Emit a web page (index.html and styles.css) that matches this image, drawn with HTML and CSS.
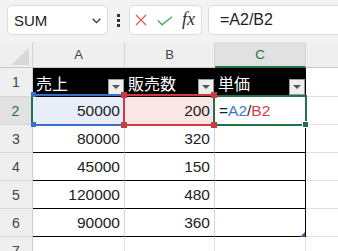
FILE: index.html
```html
<!DOCTYPE html>
<html lang="ja">
<head>
<meta charset="utf-8">
<link rel="stylesheet" href="styles.css">
</head>
<body>
<div class="toolbar">
  <div class="namebox"><span>SUM</span>
    <svg class="chev" width="9" height="6" viewBox="0 0 9 6"><path d="M0.7 0.8 L4.5 4.6 L8.3 0.8" fill="none" stroke="#333" stroke-width="1.3"/></svg>
  </div>
  <div class="dots"><i></i><i></i><i></i></div>
  <div class="fxgroup">
    <svg class="xic" width="12" height="12" viewBox="0 0 12 12"><path d="M1 1 L11 11 M11 1 L1 11" stroke="#e0595b" stroke-width="1.3" fill="none"/></svg>
    <svg class="ok" width="16" height="10" viewBox="0 0 16 10"><path d="M1 4.5 L5 8.8 L15 0.8" stroke="#4aa55c" stroke-width="1.3" fill="none"/></svg>
    <span class="fx">fx</span>
  </div>
  <div class="formula">=A2/B2</div>
</div>
<div class="sheet">
  <div class="corner"><svg width="18" height="17" viewBox="0 0 18 17"><path d="M18 0 L18 17 L0 17 Z" fill="#d8d8d8"/></svg></div>
  <div class="ch">A</div><div class="ch">B</div><div class="ch sel">C</div><div class="ch"></div>

  <div class="rh">1</div>
  <div class="th"><span>売上</span><span class="flt"></span></div>
  <div class="th"><span>販売数</span><span class="flt"></span></div>
  <div class="th c"><span>単価</span><span class="flt"></span></div>
  <div class="e"></div>

  <div class="rh sel">2</div>
  <div class="td a2">50000</div>
  <div class="td b2">200</div>
  <div class="td c left"><span>=</span><span class="ra">A2</span><span>/</span><span class="rb">B2</span></div>
  <div class="e"></div>

  <div class="rh">3</div>
  <div class="td">80000</div><div class="td">320</div><div class="td c"></div><div class="e"></div>

  <div class="rh">4</div>
  <div class="td">45000</div><div class="td">150</div><div class="td c"></div><div class="e"></div>

  <div class="rh">5</div>
  <div class="td">120000</div><div class="td">480</div><div class="td c"></div><div class="e"></div>

  <div class="rh">6</div>
  <div class="td">90000</div><div class="td">360</div><div class="td c"></div><div class="e"></div>

  <div class="rh">7</div>
  <div class="e"></div><div class="e"></div><div class="e"></div><div class="e"></div>

  <div class="rng-a"></div>
  <div class="rng-b"></div>
  <div class="act"></div>
  <i class="hb hb1"></i><i class="hb hb2"></i>
  <i class="hr hr1"></i><i class="hr hr2"></i><i class="hr hr3"></i><i class="hr hr4"></i>
  <i class="hg"></i>
  <i class="resize"></i>
</div>
</body>
</html>
```
FILE: styles.css
```css
* { box-sizing: border-box; margin: 0; padding: 0; }
html, body { overflow: hidden; }
body {
  margin: 0;
  width: 338px;
  height: 251px;
  background: #fff;
  font-family: "Liberation Sans", "Noto Sans CJK JP", sans-serif;
  color: #222;
}
.toolbar {
  height: 42px;
  background: #f3f3f3;
  display: flex;
  align-items: flex-start;
  padding: 5px 0 0 7px;
  white-space: nowrap;
  overflow: hidden;
}
.namebox {
  flex: none;
  width: 101px;
  height: 30px;
  background: #fff;
  border: 1px solid #dcdcdc;
  border-radius: 5px;
  display: flex;
  align-items: center;
  justify-content: space-between;
  padding: 0 6px;
  font-size: 15px;
  color: #222;
}
.chev { margin-top: 1px; }
.dots {
  flex: none;
  width: 21px;
  height: 30px;
  display: flex;
  flex-direction: column;
  align-items: center;
  justify-content: center;
  gap: 2px;
}
.dots i {
  display: block;
  width: 3px;
  height: 3px;
  background: #333;
}
.fxgroup {
  flex: none;
  width: 73px;
  height: 30px;
  background: #fff;
  border: 1px solid #dcdcdc;
  border-radius: 5px;
  display: flex;
  align-items: center;
  padding-left: 5px;
}
.ok { margin-left: 10px; margin-top: 1px; }
.fx {
  margin-left: 9px;
  font-family: "Liberation Serif", serif;
  font-style: italic;
  font-size: 18px;
  color: #333;
  margin-top: -2px;
}
.formula {
  flex: 1 0 auto;
  margin-left: 6px;
  margin-right: -10px;
  height: 30px;
  background: #fff;
  border: 1px solid #dcdcdc;
  border-radius: 5px;
  display: flex;
  align-items: center;
  padding-left: 11px;
  font-size: 16px;
  color: #1e1e1e;
}

.sheet {
  position: relative;
  height: 209px;
  overflow: hidden;
  display: grid;
  grid-template-columns: 33px 92px 90px 91px 91px;
  grid-template-rows: 26px 29px 28px 28px 28px 28px 28px 28px;
}
.corner {
  background: #efefef;
  border-right: 1px solid #d4d4d4;
  border-bottom: 1px solid #c8c8c8;
  display: flex;
  justify-content: flex-end;
  align-items: flex-end;
  padding: 0 3px 2px 0;
}
.ch {
  background: #efefef;
  border-right: 1px solid #d4d4d4;
  border-bottom: 1px solid #c8c8c8;
  display: flex;
  align-items: center;
  justify-content: center;
  font-size: 13px;
  color: #444;
}
.ch.sel {
  background: #e1e1e1;
  color: #217346;
  border-bottom: 2px solid #217346;
}
.rh {
  background: #efefef;
  border-right: 1px solid #cfcfcf;
  border-bottom: 1px solid #d6d6d6;
  display: flex;
  align-items: center;
  justify-content: center;
  font-size: 14px;
  color: #444;
}
.rh.sel {
  background: #e1e1e1;
  color: #217346;
  border-right: 2px solid #217346;
}
.th {
  background: #000;
  color: #fff;
  font-size: 16px;
  display: flex;
  align-items: center;
  justify-content: space-between;
  padding: 0 1px 0 3px;
}
.flt {
  align-self: flex-end;
  margin-bottom: 2px;
  width: 16px;
  height: 16px;
  background: #eeeeee;
  border: 1px solid #9c9c9c;
  position: relative;
}
.flt::after {
  content: "";
  position: absolute;
  left: 3px;
  top: 5px;
  border-left: 4px solid transparent;
  border-right: 4px solid transparent;
  border-top: 4px solid #555;
}
.td {
  border-right: 1px solid #d4d4d4;
  border-bottom: 1px solid #000;
  display: flex;
  align-items: center;
  justify-content: flex-end;
  padding-right: 4px;
  font-size: 15.5px;
  color: #222;
}
.td.c { border-right: 1px solid #000; }
.td.left { justify-content: flex-start; padding-left: 4px; }
.td.a2 { background: #e7eef9; }
.td.b2 { background: #fbe6e6; }
.ra { color: #3f76d0; }
.rb { color: #d0414a; }
.e {
  border-right: 1px solid #e1e1e1;
  border-bottom: 1px solid #e1e1e1;
}

.rng-a {
  position: absolute;
  left: 33px;
  top: 52px;
  width: 91px;
  height: 32px;
  border-top: 2px solid #3b6fc6;
  border-bottom: 2px solid #3b6fc6;
}
.rng-b {
  position: absolute;
  left: 123px;
  top: 52px;
  width: 92px;
  height: 32px;
  border: 2px solid #cc3a43;
}
.act {
  position: absolute;
  left: 213px;
  top: 53px;
  width: 94px;
  height: 31px;
  border: 2px solid #217346;
}
.hb, .hr, .hg, .resize { position: absolute; display: block; }
.hb { width: 5px; height: 5px; background: #3b6fc6; left: 31px; }
.hb1 { top: 50px; }
.hb2 { top: 80px; }
.hr { width: 6px; height: 6px; background: #cc3a43; }
.hr1 { left: 121px; top: 50px; }
.hr2 { left: 211px; top: 50px; }
.hr3 { left: 121px; top: 80px; }
.hr4 { left: 211px; top: 80px; }
.hg {
  left: 302px;
  top: 79px;
  width: 7px;
  height: 7px;
  background: #217346;
  border: 1px solid #fff;
}
.resize {
  left: 300px;
  top: 190px;
  width: 0;
  height: 0;
  border-left: 5px solid transparent;
  border-bottom: 5px solid #4a55b0;
}
```
